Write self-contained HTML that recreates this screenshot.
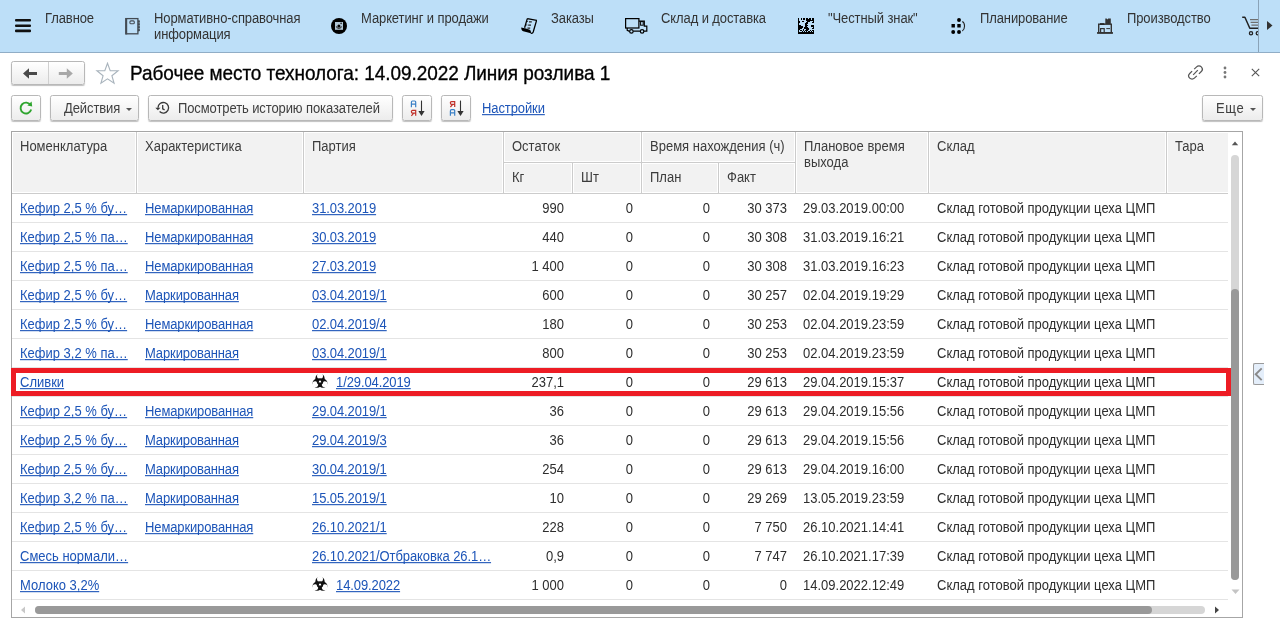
<!DOCTYPE html><html><head><meta charset="utf-8"><style>
*{box-sizing:border-box;margin:0;padding:0}
html,body{width:1280px;height:628px;overflow:hidden;background:#fff;font-family:"Liberation Sans",sans-serif;font-size:13px;color:#2e2e2e}
.a{position:absolute}
#nav{position:absolute;left:0;top:0;width:1280px;height:53px;background:#bddff8;border-bottom:1px solid #90adc6}
.nt{position:absolute;letter-spacing:-0.1px;top:11px;transform:scaleY(1.1);transform-origin:0 12px;line-height:16px;color:#333;font-size:13px;white-space:nowrap}
.btn{position:absolute;border:1px solid #b8b8b8;border-radius:2.5px;background:linear-gradient(#fff,#ececec);box-shadow:0 1px 1px rgba(0,0,0,.25)}
.bt{position:absolute;letter-spacing:-0.1px;transform:scaleY(1.1);transform-origin:0 12px;line-height:16px;color:#404040;white-space:nowrap}
.lnk{color:#1d55b8;text-decoration:underline;text-decoration-skip-ink:none}
.hl{position:absolute;background:#cccccc}
.hw{position:absolute;background:#fff}
.ht{position:absolute;transform:scaleY(1.1);transform-origin:0 12px;line-height:16px;color:#3c3c3c;white-space:nowrap}
.rw{position:absolute;left:12px;width:1216px;height:1px;background:#e4e4e4}
.c{position:absolute;transform:scaleY(1.1);transform-origin:0 12px;line-height:16px;white-space:nowrap}
.r{text-align:right}
</style></head><body>
<div id="nav">
<svg class="a" style="left:15px;top:19px" width="16" height="14" viewBox="0 0 16 14"><rect x="0" y="0" width="16" height="2.6" rx="1" fill="#111"/><rect x="0" y="5.5" width="16" height="2.6" rx="1" fill="#111"/><rect x="0" y="10.6" width="16" height="2.6" rx="1" fill="#111"/></svg>
<div class="nt" style="left:45px">Главное</div>
<svg class="a" style="left:125px;top:17px" width="16" height="18" viewBox="0 0 16 18"><rect x="0.9" y="1.6" width="12" height="15.2" fill="none" stroke="#434b53" stroke-width="1.3"/><rect x="0.3" y="1" width="1.9" height="16.4" fill="#434b53"/><rect x="4.9" y="3.9" width="4.4" height="2.9" rx="1.1" fill="none" stroke="#434b53" stroke-width="1.1"/><g fill="#434b53"><rect x="12.9" y="3.4" width="1.9" height="2"/><rect x="12.9" y="6.3" width="1.9" height="2"/><rect x="12.9" y="9.2" width="1.9" height="2"/><rect x="12.9" y="12.1" width="1.9" height="2"/></g><path d="M12.9 3 L14.8 4.2 V13.8 L12.9 15" fill="#434b53" fill-opacity=".45"/></svg>
<div class="nt" style="left:154px">Нормативно-справочная</div>
<div class="nt" style="left:154px;top:27px">информация</div>
<svg class="a" style="left:331px;top:18px" width="16" height="16" viewBox="0 0 16 16"><circle cx="8" cy="8" r="8" fill="#000"/><rect x="4" y="4" width="8" height="7.8" fill="#b0c6d6"/><path d="M5.3 8.4A2.7 2.7 0 0 0 10.5 8.4" fill="none" stroke="#3a3a3a" stroke-width="1.2"/><circle cx="7.9" cy="8" r="1.5" fill="#000"/><circle cx="10.1" cy="5.4" r=".8" fill="#222"/></svg>
<div class="nt" style="left:361px">Маркетинг и продажи</div>
<svg class="a" style="left:521px;top:18px" width="16" height="16" viewBox="0 0 16 16"><path d="M6.3 0.6L15.6 2.4L12.2 14C11.8 15.2 11 15.5 9.8 15.2M6.3 0.6L3.6 9.8" fill="none" stroke="#000" stroke-width="1.3" stroke-linejoin="round"/><path d="M0.2 9.6C3 10.2 7.5 11.2 8.6 11.8C9.8 12.4 10.2 13.8 9.9 15.3L2.2 13.3C0.9 12.9 0.2 11.6 0.2 9.6Z" fill="#000"/><path d="M8 3.8H10.8M7.2 7.2H10M6.4 10.1H9.2" stroke="#222" stroke-width="1.2"/><circle cx="6.6" cy="3.5" r=".55" fill="#222"/><circle cx="5.8" cy="6.9" r=".55" fill="#222"/></svg>
<div class="nt" style="left:551px">Заказы</div>
<svg class="a" style="left:625px;top:18px" width="23" height="17" viewBox="0 0 23 17"><rect x="0.6" y="0.6" width="13.3" height="9.4" fill="none" stroke="#000" stroke-width="1.25"/><path d="M13.9 3.2H19.3V8.2H21.8V13.2H18.8" fill="none" stroke="#000" stroke-width="1.2"/><rect x="15.6" y="3.6" width="2.6" height="3.6" fill="none" stroke="#000" stroke-width="1"/><path d="M2.2 10V12.3L4.6 13.4M8.2 13.2H15.4" fill="none" stroke="#000" stroke-width="1.2"/><circle cx="6.4" cy="13.4" r="1.75" fill="none" stroke="#000" stroke-width="1.2"/><circle cx="17.1" cy="13.4" r="1.75" fill="none" stroke="#000" stroke-width="1.2"/></svg>
<div class="nt" style="left:661px">Склад и доставка</div>
<svg class="a" style="left:798px;top:18px;filter:blur(0.35px)" width="16" height="16" viewBox="0 0 16 16"><g fill="#000"><rect x="0" y="0" width="1.02" height="1.02"/><rect x="3" y="0" width="1.02" height="1.02"/><rect x="5" y="0" width="1.02" height="1.02"/><rect x="6" y="0" width="1.02" height="1.02"/><rect x="8" y="0" width="1.02" height="1.02"/><rect x="9" y="0" width="1.02" height="1.02"/><rect x="11" y="0" width="1.02" height="1.02"/><rect x="12" y="0" width="1.02" height="1.02"/><rect x="14" y="0" width="1.02" height="1.02"/><rect x="15" y="0" width="1.02" height="1.02"/><rect x="0" y="1" width="1.02" height="1.02"/><rect x="3" y="1" width="1.02" height="1.02"/><rect x="5" y="1" width="1.02" height="1.02"/><rect x="6" y="1" width="1.02" height="1.02"/><rect x="8" y="1" width="1.02" height="1.02"/><rect x="9" y="1" width="1.02" height="1.02"/><rect x="10" y="1" width="1.02" height="1.02"/><rect x="11" y="1" width="1.02" height="1.02"/><rect x="12" y="1" width="1.02" height="1.02"/><rect x="14" y="1" width="1.02" height="1.02"/><rect x="15" y="1" width="1.02" height="1.02"/><rect x="0" y="2" width="1.02" height="1.02"/><rect x="8" y="2" width="1.02" height="1.02"/><rect x="9" y="2" width="1.02" height="1.02"/><rect x="10" y="2" width="1.02" height="1.02"/><rect x="11" y="2" width="1.02" height="1.02"/><rect x="12" y="2" width="1.02" height="1.02"/><rect x="13" y="2" width="1.02" height="1.02"/><rect x="14" y="2" width="1.02" height="1.02"/><rect x="15" y="2" width="1.02" height="1.02"/><rect x="0" y="3" width="1.02" height="1.02"/><rect x="1" y="3" width="1.02" height="1.02"/><rect x="4" y="3" width="1.02" height="1.02"/><rect x="5" y="3" width="1.02" height="1.02"/><rect x="9" y="3" width="1.02" height="1.02"/><rect x="10" y="3" width="1.02" height="1.02"/><rect x="11" y="3" width="1.02" height="1.02"/><rect x="15" y="3" width="1.02" height="1.02"/><rect x="0" y="4" width="1.02" height="1.02"/><rect x="1" y="4" width="1.02" height="1.02"/><rect x="8" y="4" width="1.02" height="1.02"/><rect x="9" y="4" width="1.02" height="1.02"/><rect x="14" y="4" width="1.02" height="1.02"/><rect x="15" y="4" width="1.02" height="1.02"/><rect x="0" y="5" width="1.02" height="1.02"/><rect x="7" y="5" width="1.02" height="1.02"/><rect x="8" y="5" width="1.02" height="1.02"/><rect x="9" y="5" width="1.02" height="1.02"/><rect x="0" y="6" width="1.02" height="1.02"/><rect x="7" y="6" width="1.02" height="1.02"/><rect x="8" y="6" width="1.02" height="1.02"/><rect x="0" y="7" width="1.02" height="1.02"/><rect x="1" y="7" width="1.02" height="1.02"/><rect x="2" y="7" width="1.02" height="1.02"/><rect x="7" y="7" width="1.02" height="1.02"/><rect x="8" y="7" width="1.02" height="1.02"/><rect x="9" y="7" width="1.02" height="1.02"/><rect x="13" y="7" width="1.02" height="1.02"/><rect x="14" y="7" width="1.02" height="1.02"/><rect x="15" y="7" width="1.02" height="1.02"/><rect x="0" y="8" width="1.02" height="1.02"/><rect x="1" y="8" width="1.02" height="1.02"/><rect x="2" y="8" width="1.02" height="1.02"/><rect x="3" y="8" width="1.02" height="1.02"/><rect x="4" y="8" width="1.02" height="1.02"/><rect x="7" y="8" width="1.02" height="1.02"/><rect x="8" y="8" width="1.02" height="1.02"/><rect x="13" y="8" width="1.02" height="1.02"/><rect x="14" y="8" width="1.02" height="1.02"/><rect x="15" y="8" width="1.02" height="1.02"/><rect x="0" y="9" width="1.02" height="1.02"/><rect x="1" y="9" width="1.02" height="1.02"/><rect x="2" y="9" width="1.02" height="1.02"/><rect x="3" y="9" width="1.02" height="1.02"/><rect x="4" y="9" width="1.02" height="1.02"/><rect x="6" y="9" width="1.02" height="1.02"/><rect x="7" y="9" width="1.02" height="1.02"/><rect x="8" y="9" width="1.02" height="1.02"/><rect x="9" y="9" width="1.02" height="1.02"/><rect x="15" y="9" width="1.02" height="1.02"/><rect x="0" y="10" width="1.02" height="1.02"/><rect x="1" y="10" width="1.02" height="1.02"/><rect x="2" y="10" width="1.02" height="1.02"/><rect x="3" y="10" width="1.02" height="1.02"/><rect x="6" y="10" width="1.02" height="1.02"/><rect x="7" y="10" width="1.02" height="1.02"/><rect x="8" y="10" width="1.02" height="1.02"/><rect x="9" y="10" width="1.02" height="1.02"/><rect x="10" y="10" width="1.02" height="1.02"/><rect x="14" y="10" width="1.02" height="1.02"/><rect x="15" y="10" width="1.02" height="1.02"/><rect x="0" y="11" width="1.02" height="1.02"/><rect x="1" y="11" width="1.02" height="1.02"/><rect x="5" y="11" width="1.02" height="1.02"/><rect x="8" y="11" width="1.02" height="1.02"/><rect x="9" y="11" width="1.02" height="1.02"/><rect x="10" y="11" width="1.02" height="1.02"/><rect x="0" y="12" width="1.02" height="1.02"/><rect x="2" y="12" width="1.02" height="1.02"/><rect x="3" y="12" width="1.02" height="1.02"/><rect x="5" y="12" width="1.02" height="1.02"/><rect x="7" y="12" width="1.02" height="1.02"/><rect x="8" y="12" width="1.02" height="1.02"/><rect x="9" y="12" width="1.02" height="1.02"/><rect x="12" y="12" width="1.02" height="1.02"/><rect x="14" y="12" width="1.02" height="1.02"/><rect x="15" y="12" width="1.02" height="1.02"/><rect x="0" y="13" width="1.02" height="1.02"/><rect x="4" y="13" width="1.02" height="1.02"/><rect x="6" y="13" width="1.02" height="1.02"/><rect x="8" y="13" width="1.02" height="1.02"/><rect x="10" y="13" width="1.02" height="1.02"/><rect x="11" y="13" width="1.02" height="1.02"/><rect x="13" y="13" width="1.02" height="1.02"/><rect x="15" y="13" width="1.02" height="1.02"/><rect x="0" y="14" width="1.02" height="1.02"/><rect x="1" y="14" width="1.02" height="1.02"/><rect x="2" y="14" width="1.02" height="1.02"/><rect x="3" y="14" width="1.02" height="1.02"/><rect x="4" y="14" width="1.02" height="1.02"/><rect x="5" y="14" width="1.02" height="1.02"/><rect x="6" y="14" width="1.02" height="1.02"/><rect x="7" y="14" width="1.02" height="1.02"/><rect x="8" y="14" width="1.02" height="1.02"/><rect x="9" y="14" width="1.02" height="1.02"/><rect x="10" y="14" width="1.02" height="1.02"/><rect x="11" y="14" width="1.02" height="1.02"/><rect x="12" y="14" width="1.02" height="1.02"/><rect x="13" y="14" width="1.02" height="1.02"/><rect x="14" y="14" width="1.02" height="1.02"/><rect x="15" y="14" width="1.02" height="1.02"/><rect x="0" y="15" width="1.02" height="1.02"/><rect x="1" y="15" width="1.02" height="1.02"/><rect x="2" y="15" width="1.02" height="1.02"/><rect x="3" y="15" width="1.02" height="1.02"/><rect x="4" y="15" width="1.02" height="1.02"/><rect x="5" y="15" width="1.02" height="1.02"/><rect x="6" y="15" width="1.02" height="1.02"/><rect x="7" y="15" width="1.02" height="1.02"/><rect x="8" y="15" width="1.02" height="1.02"/><rect x="9" y="15" width="1.02" height="1.02"/><rect x="10" y="15" width="1.02" height="1.02"/><rect x="11" y="15" width="1.02" height="1.02"/><rect x="12" y="15" width="1.02" height="1.02"/><rect x="13" y="15" width="1.02" height="1.02"/><rect x="14" y="15" width="1.02" height="1.02"/><rect x="15" y="15" width="1.02" height="1.02"/></g></svg>
<div class="nt" style="left:828px">"Честный знак"</div>
<svg class="a" style="left:951px;top:18px" width="16" height="16" viewBox="0 0 16 16"><circle cx="8" cy="2" r="1.95" fill="#000"/><rect x="0.5" y="6" width="3.4" height="3.5" fill="#000"/><rect x="6.3" y="6" width="3.4" height="3.5" fill="#000"/><circle cx="2.2" cy="14" r="1.95" fill="#000"/><circle cx="8" cy="14" r="1.95" fill="#000"/><path d="M11.3 3.4 C14.3 5 14.3 11.2 11.3 12.9" fill="none" stroke="#222" stroke-width="1.1"/></svg>
<div class="nt" style="left:980px">Планирование</div>
<svg class="a" style="left:1097px;top:18px" width="16" height="16" viewBox="0 0 16 16"><path d="M8.3 6V0.6H9.6L10.4 1.6L11.2 0.6H13.8V6Z" fill="#333"/><rect x="1.7" y="6.2" width="12.6" height="8.5" fill="none" stroke="#333" stroke-width="1.4"/><rect x="3" y="5.2" width="4.4" height="1.6" fill="#222"/><rect x="3.6" y="10.6" width="3.6" height="4" fill="none" stroke="#333" stroke-width="1.2"/><path d="M9.3 10.6H13" stroke="#333" stroke-width="1"/><rect x="0" y="14.1" width="16" height="1.7" fill="#333"/></svg>
<div class="nt" style="left:1127px">Производство</div>
<div class="a" style="left:1240px;top:14px;width:18px;height:24px;overflow:hidden"><svg class="a" style="left:0;top:0" width="24" height="24" viewBox="0 0 24 24"><path d="M2.2 3.2H4.9L9.8 14.2H20" fill="none" stroke="#222" stroke-width="1.5" stroke-linejoin="round"/><path d="M10 5.6H20M10.6 8.4H20M11.4 11.1H20" stroke="#6f6f6f" stroke-width="1.4"/><circle cx="11" cy="19.3" r="1.6" fill="none" stroke="#222" stroke-width="1.3"/><circle cx="17.8" cy="19.3" r="1.6" fill="none" stroke="#222" stroke-width="1.3"/></svg></div>
<div class="a" style="left:1258px;top:0;width:1px;height:52px;background:#8aa3b8"></div>
<svg class="a" style="left:1267px;top:21px" width="6" height="9" viewBox="0 0 6 9"><path d="M0 0L5.5 4.5L0 9Z" fill="#333"/></svg>
</div>
<div class="btn" style="left:11px;top:61px;width:74px;height:24px"></div>
<div class="a" style="left:48px;top:62px;width:1px;height:22px;background:#d0d0d0"></div>
<svg class="a" style="left:22px;top:67px" width="16" height="13" viewBox="0 0 16 13"><path d="M1 6.5L7 1.2V5.1H15V8H7V11.8Z" fill="#4a4a4a"/></svg>
<svg class="a" style="left:58px;top:67px" width="16" height="13" viewBox="0 0 16 13"><path d="M14.8 6.5L8.8 1.2V5.1H0.8V8H8.8V11.8Z" fill="#a8a8a8"/></svg>
<svg class="a" style="left:95px;top:62px" width="25" height="24" viewBox="0 0 25 24"><path d="M12.5 1.2L15.2 8.6L23.1 8.8L16.9 13.7L19.1 21.3L12.5 16.9L5.9 21.3L8.1 13.7L1.9 8.8L9.8 8.6Z" fill="none" stroke="#a9b4bd" stroke-width="1.1" stroke-linejoin="miter"/></svg>
<div class="a" style="left:130px;top:62px;font-size:19px;letter-spacing:-0.06px;-webkit-text-stroke:0.3px #000;line-height:24px;transform:scaleY(1.07);transform-origin:0 18px;color:#000;white-space:nowrap">Рабочее место технолога: 14.09.2022 Линия розлива 1</div>
<svg class="a" style="left:1187px;top:64px" width="17" height="17" viewBox="0 0 17 17"><path d="M7.2 5.2L9.6 2.8C10.9 1.5 13 1.5 14.3 2.8C15.6 4.1 15.6 6.2 14.3 7.5L11.9 9.9" fill="none" stroke="#555" stroke-width="1.2"/><path d="M9.8 11.8L7.4 14.2C6.1 15.5 4 15.5 2.7 14.2C1.4 12.9 1.4 10.8 2.7 9.5L5.1 7.1" fill="none" stroke="#555" stroke-width="1.2"/><path d="M6.2 10.8L10.8 6.2" stroke="#555" stroke-width="1.2"/></svg>
<svg class="a" style="left:1222px;top:66px" width="6" height="13" viewBox="0 0 6 13"><circle cx="3" cy="2" r="1.4" fill="#777"/><circle cx="3" cy="6.5" r="1.4" fill="#777"/><circle cx="3" cy="11" r="1.4" fill="#777"/></svg>
<svg class="a" style="left:1251px;top:68px" width="9" height="9" viewBox="0 0 9 9"><path d="M.8 .8L8.2 8.2M8.2 .8L.8 8.2" stroke="#555" stroke-width="1.1"/></svg>
<div class="btn" style="left:11px;top:95px;width:30px;height:26px"></div>
<svg class="a" style="left:18px;top:100px" width="16" height="16" viewBox="0 0 16 16"><path d="M12.6 5.2A5.4 5.4 0 1 0 13.2 9.5" fill="none" stroke="#2fa52f" stroke-width="1.9"/><path d="M9.4 5.6L14.2 6.4L13.6 1.6Z" fill="#2fa52f"/></svg>
<div class="btn" style="left:50px;top:95px;width:89px;height:26px"></div>
<div class="bt" style="left:64px;top:101px">Действия</div>
<svg class="a" style="left:126px;top:108px" width="6" height="3" viewBox="0 0 6 3"><path d="M0 0H6L3 3Z" fill="#555"/></svg>
<div class="btn" style="left:148px;top:95px;width:245px;height:26px"></div>
<svg class="a" style="left:154px;top:100px" width="16" height="16" viewBox="0 0 16 16"><path d="M4 7.7A5.3 5.3 0 1 1 5.6 11.6" fill="none" stroke="#3a3a3a" stroke-width="1.35"/><path d="M1.3 7.8H6.5L3.9 10.3Z" fill="#3a3a3a"/><path d="M8.7 5V8.8L10.6 9.9" fill="none" stroke="#3a3a3a" stroke-width="1.3"/></svg>
<div class="bt" style="left:178px;top:101px">Посмотреть историю показателей</div>
<div class="btn" style="left:402px;top:95px;width:30px;height:26px"></div>
<svg class="a" style="left:409px;top:99px" width="18" height="18" viewBox="0 0 18 18"><path d="M2.4 8.2V3.3C2.4 2.5 2.8 2 3.5 2H5.6C6.3 2 6.7 2.5 6.7 3.3V8.2M2.4 5.2H6.7" fill="none" stroke="#3a80c6" stroke-width="1.2"/><path d="M6.7 16.8V11.4H3.6C2.8 11.4 2.4 11.9 2.4 12.8C2.4 13.7 2.8 14.2 3.6 14.2H6.7M4.7 14.2L2.4 16.8" fill="none" stroke="#c0302a" stroke-width="1.2"/><path d="M12.5 1.6V13" stroke="#333" stroke-width="1.1"/><path d="M9.4 12H15.6L12.5 17Z" fill="#333"/></svg>
<div class="btn" style="left:441px;top:95px;width:30px;height:26px"></div>
<svg class="a" style="left:448px;top:99px" width="18" height="18" viewBox="0 0 18 18"><path d="M6.7 8V2.6H3.6C2.8 2.6 2.4 3.1 2.4 4C2.4 4.9 2.8 5.4 3.6 5.4H6.7M4.7 5.4L2.4 8" fill="none" stroke="#c0302a" stroke-width="1.2"/><path d="M2.4 16.8V11.9C2.4 11.1 2.8 10.6 3.5 10.6H5.6C6.3 10.6 6.7 11.1 6.7 11.9V16.8M2.4 13.8H6.7" fill="none" stroke="#3a80c6" stroke-width="1.2"/><path d="M12.5 1.6V13" stroke="#333" stroke-width="1.1"/><path d="M9.4 12H15.6L12.5 17Z" fill="#333"/></svg>
<div class="bt lnk" style="left:482px;top:101px">Настройки</div>
<div class="btn" style="left:1202px;top:95px;width:61px;height:26px"></div>
<div class="bt" style="left:1216px;top:101px;letter-spacing:0.6px">Еще</div>
<svg class="a" style="left:1250px;top:108px" width="6" height="3" viewBox="0 0 6 3"><path d="M0 0H6L3 3Z" fill="#555"/></svg>
<div class="a" style="left:11px;top:131px;width:1232px;height:487px;border:1px solid #a6a6a6"></div>
<div class="a" style="left:12px;top:132px;width:1216px;height:61px;background:#f2f2f2"></div>
<div class="hw" style="left:12px;top:132px;width:1216px;height:1px"></div>
<div class="hw" style="left:12px;top:132px;width:1px;height:61px"></div>
<div class="hw" style="left:12px;top:192px;width:1216px;height:1px"></div>
<div class="hw" style="left:503px;top:161px;width:293px;height:3px"></div>
<div class="hw" style="left:135px;top:132px;width:3px;height:61px"></div>
<div class="hw" style="left:302px;top:132px;width:3px;height:61px"></div>
<div class="hw" style="left:502px;top:132px;width:3px;height:61px"></div>
<div class="hw" style="left:640px;top:132px;width:3px;height:61px"></div>
<div class="hw" style="left:794px;top:132px;width:3px;height:61px"></div>
<div class="hw" style="left:927px;top:132px;width:3px;height:61px"></div>
<div class="hw" style="left:1165px;top:132px;width:3px;height:61px"></div>
<div class="hw" style="left:571px;top:162px;width:3px;height:31px"></div>
<div class="hw" style="left:717px;top:162px;width:3px;height:31px"></div>
<div class="hl" style="left:503px;top:162px;width:293px;height:1px"></div>
<div class="hl" style="left:136px;top:132px;width:1px;height:61px"></div>
<div class="hl" style="left:303px;top:132px;width:1px;height:61px"></div>
<div class="hl" style="left:503px;top:132px;width:1px;height:61px"></div>
<div class="hl" style="left:641px;top:132px;width:1px;height:61px"></div>
<div class="hl" style="left:795px;top:132px;width:1px;height:61px"></div>
<div class="hl" style="left:928px;top:132px;width:1px;height:61px"></div>
<div class="hl" style="left:1166px;top:132px;width:1px;height:61px"></div>
<div class="hl" style="left:572px;top:162px;width:1px;height:31px"></div>
<div class="hl" style="left:718px;top:162px;width:1px;height:31px"></div>
<div class="hl" style="left:12px;top:193px;width:1216px;height:1px"></div>
<div class="ht" style="left:20px;top:139px">Номенклатура</div>
<div class="ht" style="left:145px;top:139px">Характеристика</div>
<div class="ht" style="left:312px;top:139px">Партия</div>
<div class="ht" style="left:512px;top:139px">Остаток</div>
<div class="ht" style="left:650px;top:139px">Время нахождения (ч)</div>
<div class="ht" style="left:804px;top:139px">Плановое время</div>
<div class="ht" style="left:937px;top:139px">Склад</div>
<div class="ht" style="left:1175px;top:139px">Тара</div>
<div class="ht" style="left:804px;top:155px">выхода</div>
<div class="ht" style="left:512px;top:170px">Кг</div>
<div class="ht" style="left:581px;top:170px">Шт</div>
<div class="ht" style="left:650px;top:170px">План</div>
<div class="ht" style="left:727px;top:170px">Факт</div>
<div class="c lnk" style="left:20px;top:201px">Кефир 2,5 % бу…</div>
<div class="c lnk" style="left:145px;top:201px;letter-spacing:-0.12px">Немаркированная</div>
<div class="c lnk" style="left:312px;top:201px;letter-spacing:-0.1px">31.03.2019</div>
<div class="c r" style="left:503px;width:61px;top:201px">990</div>
<div class="c r" style="left:572px;width:61px;top:201px">0</div>
<div class="c r" style="left:641px;width:69px;top:201px">0</div>
<div class="c r" style="left:718px;width:69px;top:201px">30 373</div>
<div class="c" style="left:803px;top:201px">29.03.2019.00:00</div>
<div class="c" style="left:937px;top:201px">Склад готовой продукции цеха ЦМП</div>
<div class="rw" style="top:222px"></div>
<div class="c lnk" style="left:20px;top:230px">Кефир 2,5 % па…</div>
<div class="c lnk" style="left:145px;top:230px;letter-spacing:-0.12px">Немаркированная</div>
<div class="c lnk" style="left:312px;top:230px;letter-spacing:-0.1px">30.03.2019</div>
<div class="c r" style="left:503px;width:61px;top:230px">440</div>
<div class="c r" style="left:572px;width:61px;top:230px">0</div>
<div class="c r" style="left:641px;width:69px;top:230px">0</div>
<div class="c r" style="left:718px;width:69px;top:230px">30 308</div>
<div class="c" style="left:803px;top:230px">31.03.2019.16:21</div>
<div class="c" style="left:937px;top:230px">Склад готовой продукции цеха ЦМП</div>
<div class="rw" style="top:251px"></div>
<div class="c lnk" style="left:20px;top:259px">Кефир 2,5 % па…</div>
<div class="c lnk" style="left:145px;top:259px;letter-spacing:-0.12px">Немаркированная</div>
<div class="c lnk" style="left:312px;top:259px;letter-spacing:-0.1px">27.03.2019</div>
<div class="c r" style="left:503px;width:61px;top:259px">1 400</div>
<div class="c r" style="left:572px;width:61px;top:259px">0</div>
<div class="c r" style="left:641px;width:69px;top:259px">0</div>
<div class="c r" style="left:718px;width:69px;top:259px">30 308</div>
<div class="c" style="left:803px;top:259px">31.03.2019.16:23</div>
<div class="c" style="left:937px;top:259px">Склад готовой продукции цеха ЦМП</div>
<div class="rw" style="top:280px"></div>
<div class="c lnk" style="left:20px;top:288px">Кефир 2,5 % бу…</div>
<div class="c lnk" style="left:145px;top:288px;letter-spacing:-0.12px">Маркированная</div>
<div class="c lnk" style="left:312px;top:288px;letter-spacing:-0.1px">03.04.2019/1</div>
<div class="c r" style="left:503px;width:61px;top:288px">600</div>
<div class="c r" style="left:572px;width:61px;top:288px">0</div>
<div class="c r" style="left:641px;width:69px;top:288px">0</div>
<div class="c r" style="left:718px;width:69px;top:288px">30 257</div>
<div class="c" style="left:803px;top:288px">02.04.2019.19:29</div>
<div class="c" style="left:937px;top:288px">Склад готовой продукции цеха ЦМП</div>
<div class="rw" style="top:309px"></div>
<div class="c lnk" style="left:20px;top:317px">Кефир 2,5 % бу…</div>
<div class="c lnk" style="left:145px;top:317px;letter-spacing:-0.12px">Немаркированная</div>
<div class="c lnk" style="left:312px;top:317px;letter-spacing:-0.1px">02.04.2019/4</div>
<div class="c r" style="left:503px;width:61px;top:317px">180</div>
<div class="c r" style="left:572px;width:61px;top:317px">0</div>
<div class="c r" style="left:641px;width:69px;top:317px">0</div>
<div class="c r" style="left:718px;width:69px;top:317px">30 253</div>
<div class="c" style="left:803px;top:317px">02.04.2019.23:59</div>
<div class="c" style="left:937px;top:317px">Склад готовой продукции цеха ЦМП</div>
<div class="rw" style="top:338px"></div>
<div class="c lnk" style="left:20px;top:346px">Кефир 3,2 % па…</div>
<div class="c lnk" style="left:145px;top:346px;letter-spacing:-0.12px">Маркированная</div>
<div class="c lnk" style="left:312px;top:346px;letter-spacing:-0.1px">03.04.2019/1</div>
<div class="c r" style="left:503px;width:61px;top:346px">800</div>
<div class="c r" style="left:572px;width:61px;top:346px">0</div>
<div class="c r" style="left:641px;width:69px;top:346px">0</div>
<div class="c r" style="left:718px;width:69px;top:346px">30 253</div>
<div class="c" style="left:803px;top:346px">02.04.2019.23:59</div>
<div class="c" style="left:937px;top:346px">Склад готовой продукции цеха ЦМП</div>
<div class="rw" style="top:367px"></div>
<div class="c lnk" style="left:20px;top:375px">Сливки</div>
<div class="a" style="left:312px;top:373px;width:16px;height:16px"><svg width="16" height="16" viewBox="0 0 16 16" style="position:absolute;left:0;top:0"><defs><mask id="bm6_0"><rect width="16" height="16" fill="#fff"/><circle cx="8.00" cy="3.10" r="3.0" fill="#000"/><line x1="8.00" y1="7.40" x2="8.00" y2="5.40" stroke="#000" stroke-width="0.8"/><circle cx="8" cy="8.6" r="1.3" fill="#000"/></mask><mask id="bm6_1"><rect width="16" height="16" fill="#fff"/><circle cx="3.24" cy="11.35" r="3.0" fill="#000"/><line x1="6.96" y1="9.20" x2="5.23" y2="10.20" stroke="#000" stroke-width="0.8"/><circle cx="8" cy="8.6" r="1.3" fill="#000"/></mask><mask id="bm6_2"><rect width="16" height="16" fill="#fff"/><circle cx="12.76" cy="11.35" r="3.0" fill="#000"/><line x1="9.04" y1="9.20" x2="10.77" y2="10.20" stroke="#000" stroke-width="0.8"/><circle cx="8" cy="8.6" r="1.3" fill="#000"/></mask></defs><circle cx="8.00" cy="5.30" r="4.6" fill="#111" mask="url(#bm6_0)"/><circle cx="5.14" cy="10.25" r="4.6" fill="#111" mask="url(#bm6_1)"/><circle cx="10.86" cy="10.25" r="4.6" fill="#111" mask="url(#bm6_2)"/><circle cx="8" cy="8.6" r="2.6" fill="none" stroke="#111" stroke-width="1.3"/></svg></div>
<div class="c lnk" style="left:336px;top:375px;letter-spacing:-0.1px">1/29.04.2019</div>
<div class="c r" style="left:503px;width:61px;top:375px">237,1</div>
<div class="c r" style="left:572px;width:61px;top:375px">0</div>
<div class="c r" style="left:641px;width:69px;top:375px">0</div>
<div class="c r" style="left:718px;width:69px;top:375px">29 613</div>
<div class="c" style="left:803px;top:375px">29.04.2019.15:37</div>
<div class="c" style="left:937px;top:375px">Склад готовой продукции цеха ЦМП</div>
<div class="rw" style="top:396px"></div>
<div class="c lnk" style="left:20px;top:404px">Кефир 2,5 % бу…</div>
<div class="c lnk" style="left:145px;top:404px;letter-spacing:-0.12px">Немаркированная</div>
<div class="c lnk" style="left:312px;top:404px;letter-spacing:-0.1px">29.04.2019/1</div>
<div class="c r" style="left:503px;width:61px;top:404px">36</div>
<div class="c r" style="left:572px;width:61px;top:404px">0</div>
<div class="c r" style="left:641px;width:69px;top:404px">0</div>
<div class="c r" style="left:718px;width:69px;top:404px">29 613</div>
<div class="c" style="left:803px;top:404px">29.04.2019.15:56</div>
<div class="c" style="left:937px;top:404px">Склад готовой продукции цеха ЦМП</div>
<div class="rw" style="top:425px"></div>
<div class="c lnk" style="left:20px;top:433px">Кефир 2,5 % бу…</div>
<div class="c lnk" style="left:145px;top:433px;letter-spacing:-0.12px">Маркированная</div>
<div class="c lnk" style="left:312px;top:433px;letter-spacing:-0.1px">29.04.2019/3</div>
<div class="c r" style="left:503px;width:61px;top:433px">36</div>
<div class="c r" style="left:572px;width:61px;top:433px">0</div>
<div class="c r" style="left:641px;width:69px;top:433px">0</div>
<div class="c r" style="left:718px;width:69px;top:433px">29 613</div>
<div class="c" style="left:803px;top:433px">29.04.2019.15:56</div>
<div class="c" style="left:937px;top:433px">Склад готовой продукции цеха ЦМП</div>
<div class="rw" style="top:454px"></div>
<div class="c lnk" style="left:20px;top:462px">Кефир 2,5 % бу…</div>
<div class="c lnk" style="left:145px;top:462px;letter-spacing:-0.12px">Маркированная</div>
<div class="c lnk" style="left:312px;top:462px;letter-spacing:-0.1px">30.04.2019/1</div>
<div class="c r" style="left:503px;width:61px;top:462px">254</div>
<div class="c r" style="left:572px;width:61px;top:462px">0</div>
<div class="c r" style="left:641px;width:69px;top:462px">0</div>
<div class="c r" style="left:718px;width:69px;top:462px">29 613</div>
<div class="c" style="left:803px;top:462px">29.04.2019.16:00</div>
<div class="c" style="left:937px;top:462px">Склад готовой продукции цеха ЦМП</div>
<div class="rw" style="top:483px"></div>
<div class="c lnk" style="left:20px;top:491px">Кефир 3,2 % па…</div>
<div class="c lnk" style="left:145px;top:491px;letter-spacing:-0.12px">Маркированная</div>
<div class="c lnk" style="left:312px;top:491px;letter-spacing:-0.1px">15.05.2019/1</div>
<div class="c r" style="left:503px;width:61px;top:491px">10</div>
<div class="c r" style="left:572px;width:61px;top:491px">0</div>
<div class="c r" style="left:641px;width:69px;top:491px">0</div>
<div class="c r" style="left:718px;width:69px;top:491px">29 269</div>
<div class="c" style="left:803px;top:491px">13.05.2019.23:59</div>
<div class="c" style="left:937px;top:491px">Склад готовой продукции цеха ЦМП</div>
<div class="rw" style="top:512px"></div>
<div class="c lnk" style="left:20px;top:520px">Кефир 2,5 % бу…</div>
<div class="c lnk" style="left:145px;top:520px;letter-spacing:-0.12px">Немаркированная</div>
<div class="c lnk" style="left:312px;top:520px;letter-spacing:-0.1px">26.10.2021/1</div>
<div class="c r" style="left:503px;width:61px;top:520px">228</div>
<div class="c r" style="left:572px;width:61px;top:520px">0</div>
<div class="c r" style="left:641px;width:69px;top:520px">0</div>
<div class="c r" style="left:718px;width:69px;top:520px">7 750</div>
<div class="c" style="left:803px;top:520px">26.10.2021.14:41</div>
<div class="c" style="left:937px;top:520px">Склад готовой продукции цеха ЦМП</div>
<div class="rw" style="top:541px"></div>
<div class="c lnk" style="left:20px;top:549px">Смесь нормали…</div>
<div class="c lnk" style="left:312px;top:549px;letter-spacing:-0.1px">26.10.2021/Отбраковка 26.1…</div>
<div class="c r" style="left:503px;width:61px;top:549px">0,9</div>
<div class="c r" style="left:572px;width:61px;top:549px">0</div>
<div class="c r" style="left:641px;width:69px;top:549px">0</div>
<div class="c r" style="left:718px;width:69px;top:549px">7 747</div>
<div class="c" style="left:803px;top:549px">26.10.2021.17:39</div>
<div class="c" style="left:937px;top:549px">Склад готовой продукции цеха ЦМП</div>
<div class="rw" style="top:570px"></div>
<div class="c lnk" style="left:20px;top:578px">Молоко 3,2%</div>
<div class="a" style="left:312px;top:576px;width:16px;height:16px"><svg width="16" height="16" viewBox="0 0 16 16" style="position:absolute;left:0;top:0"><defs><mask id="bm13_0"><rect width="16" height="16" fill="#fff"/><circle cx="8.00" cy="3.10" r="3.0" fill="#000"/><line x1="8.00" y1="7.40" x2="8.00" y2="5.40" stroke="#000" stroke-width="0.8"/><circle cx="8" cy="8.6" r="1.3" fill="#000"/></mask><mask id="bm13_1"><rect width="16" height="16" fill="#fff"/><circle cx="3.24" cy="11.35" r="3.0" fill="#000"/><line x1="6.96" y1="9.20" x2="5.23" y2="10.20" stroke="#000" stroke-width="0.8"/><circle cx="8" cy="8.6" r="1.3" fill="#000"/></mask><mask id="bm13_2"><rect width="16" height="16" fill="#fff"/><circle cx="12.76" cy="11.35" r="3.0" fill="#000"/><line x1="9.04" y1="9.20" x2="10.77" y2="10.20" stroke="#000" stroke-width="0.8"/><circle cx="8" cy="8.6" r="1.3" fill="#000"/></mask></defs><circle cx="8.00" cy="5.30" r="4.6" fill="#111" mask="url(#bm13_0)"/><circle cx="5.14" cy="10.25" r="4.6" fill="#111" mask="url(#bm13_1)"/><circle cx="10.86" cy="10.25" r="4.6" fill="#111" mask="url(#bm13_2)"/><circle cx="8" cy="8.6" r="2.6" fill="none" stroke="#111" stroke-width="1.3"/></svg></div>
<div class="c lnk" style="left:336px;top:578px;letter-spacing:-0.1px">14.09.2022</div>
<div class="c r" style="left:503px;width:61px;top:578px">1 000</div>
<div class="c r" style="left:572px;width:61px;top:578px">0</div>
<div class="c r" style="left:641px;width:69px;top:578px">0</div>
<div class="c r" style="left:718px;width:69px;top:578px">0</div>
<div class="c" style="left:803px;top:578px">14.09.2022.12:49</div>
<div class="c" style="left:937px;top:578px">Склад готовой продукции цеха ЦМП</div>
<div class="rw" style="top:599px"></div>
<svg class="a" style="left:1231px;top:141px" width="8" height="5" viewBox="0 0 8 5"><path d="M.8 4.2L4 .5L7.2 4.2Z" fill="#555"/></svg>
<div class="a" style="left:1231px;top:155px;width:8px;height:425px;border-radius:4px;background:#d6d6d6"></div>
<div class="a" style="left:1231px;top:289px;width:8px;height:291px;border-radius:4px;background:#999999"></div>
<svg class="a" style="left:1231px;top:589px" width="9" height="6" viewBox="0 0 9 6"><path d="M.5 .5L4.5 5L8.5 .5Z" fill="#c4c4c4"/></svg>
<svg class="a" style="left:20px;top:606px" width="6" height="8" viewBox="0 0 6 8"><path d="M5 .5L1 4L5 7.5Z" fill="#c8c8c8"/></svg>
<div class="a" style="left:35px;top:606px;width:1170px;height:8px;border-radius:4px;background:#d6d6d6"></div>
<div class="a" style="left:35px;top:606px;width:1117px;height:8px;border-radius:4px;background:#999999"></div>
<svg class="a" style="left:1214px;top:606px" width="6" height="8" viewBox="0 0 6 8"><path d="M1 .5L5 4L1 7.5Z" fill="#444"/></svg>
<div class="a" style="left:11px;top:368px;width:1220px;height:28px;border:5px solid #ed1c24"></div>
<div class="a" style="left:1253px;top:363px;width:11px;height:22px;border:1px solid #9a9a9a;border-right:none;border-radius:2px 0 0 2px;background:#e4eefa"></div>
<svg class="a" style="left:1253px;top:363px" width="11" height="22" viewBox="0 0 11 22"><path d="M8.7 5.4L2.7 11.2L8.7 17.2" fill="none" stroke="#8a8a8a" stroke-width="1.9"/></svg>
</body></html>
